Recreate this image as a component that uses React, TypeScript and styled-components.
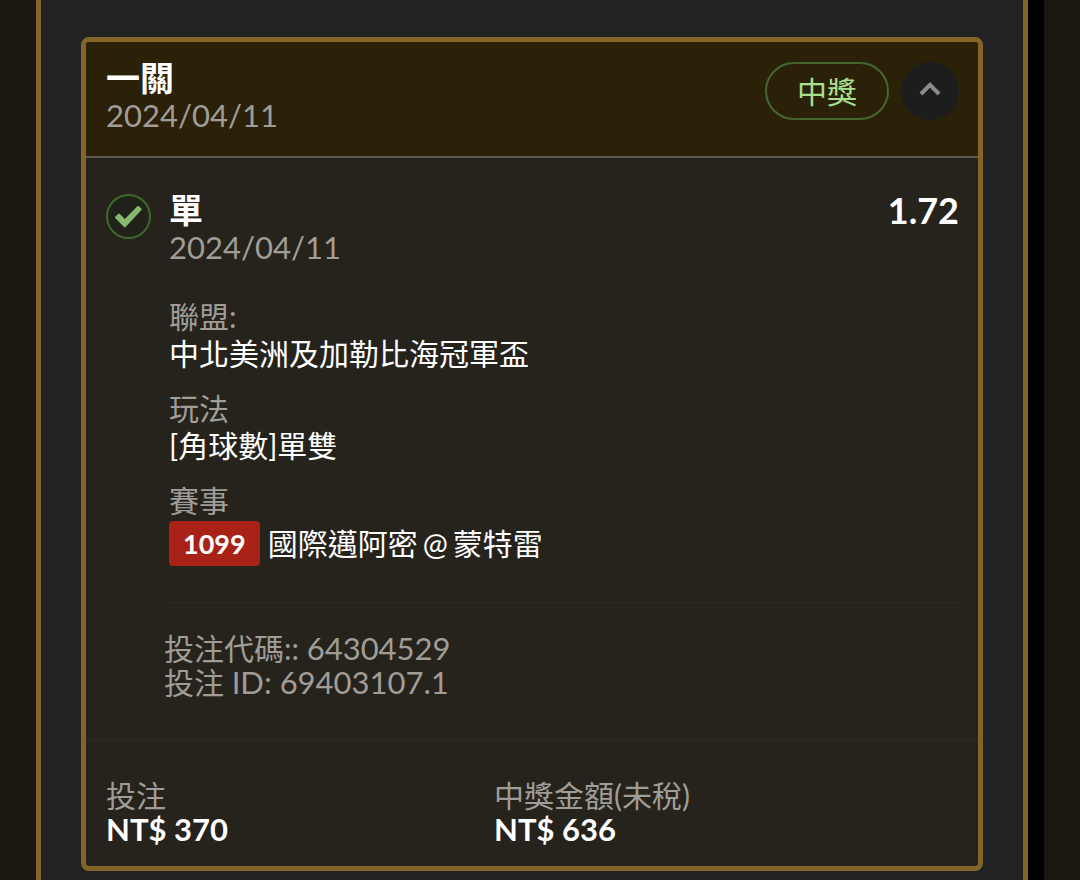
import React, { useState } from "react";
import styled, { createGlobalStyle } from "styled-components";

const GlobalStyle = createGlobalStyle`
  *, *::before, *::after { box-sizing: border-box; }
  html, body, #root { margin: 0; min-height: 100vh; }
  body {
    background: #1b1811;
    color: #ffffff;
    font-family: Lato, "Noto Sans CJK TC", sans-serif;
  }
  h2, h3, p, dl, dt, dd { margin: 0; }
`;

const gold = "#836627";
const muted = "#a09d98";

const Page = styled.div`
  display: flex;
  min-height: 100vh;
  padding: 0 36px;
`;

const Panel = styled.main`
  flex: 1;
  min-width: 0;
  padding: 37px 40px 9px;
  background: #222223;
  border: solid ${gold};
  border-width: 0 5px;
`;

const Gutter = styled.div`
  flex: 0 0 16px;
  background: #000000;
`;

const Card = styled.article`
  overflow: hidden;
  background: #26231d;
  border: 5px solid ${gold};
  border-radius: 8px;
`;

const CardHeader = styled.header`
  display: flex;
  align-items: center;
  justify-content: space-between;
  padding: 18px 19px 22px 20px;
  background: #2b2109;
  border-bottom: 2px solid #5f5a4e;
`;

const Title = styled.h2`
  font-size: 34px;
  line-height: 36px;
  font-weight: 700;
`;

const Selection = styled(Title).attrs({ as: "h3" })``;

const DateText = styled.time`
  display: block;
  font-size: 31px;
  line-height: 38px;
  color: ${muted};
`;

const Actions = styled.div`
  display: flex;
  align-self: flex-start;
  gap: 12px;
  padding-top: 2px;
`;

const Status = styled.span`
  height: 58px;
  padding: 0 30px;
  border: 2px solid #44672e;
  border-radius: 29px;
  font-size: 30px;
  line-height: 54px;
  color: #a9e08f;
`;

const Toggle = styled.button`
  display: grid;
  place-items: center;
  width: 58px;
  height: 58px;
  padding: 0 0 4px;
  border: 0;
  border-radius: 50%;
  background: #1d1d1e;
  cursor: pointer;
`;

const Bet = styled.section`
  display: flex;
  gap: 18px;
  padding: 34px 19px 40px 20px;
  border-bottom: 1px solid #2d2a25;
`;

const ResultMark = styled.div`
  padding-top: 2px;
  line-height: 0;
`;

const Details = styled.div`
  flex: 1;
  min-width: 0;
`;

const BetHead = styled.div`
  display: flex;
  justify-content: space-between;
`;

const Odds = styled.strong`
  font-size: 36px;
  line-height: 36px;
  font-weight: 700;
`;

const Fields = styled.dl`
  display: grid;
  gap: 18px;
  padding: 32px 0 36px;
  border-bottom: 1px solid #2d2a25;
`;

const Label = styled.dt`
  font-size: 30px;
  line-height: 37px;
  color: ${muted};
`;

const Value = styled.dd`
  font-size: 30px;
  line-height: 37px;
`;

const Match = styled(Value)`
  display: flex;
  align-items: center;
  gap: 8px;
  padding-top: 2px;
`;

const Teams = styled.span`
  display: flex;
  gap: 5px;
`;

const GameNumber = styled.span`
  padding: 0 14px;
  border-radius: 4px;
  background: #a82218;
  font-size: 27px;
  line-height: 45px;
  font-weight: 700;
`;

const Codes = styled.div`
  margin: 28px 0 0 -5px;
  font-size: 30px;
  line-height: 34px;
  color: ${muted};
`;

const Digits = styled.span`
  font-size: 31px;
`;

const Totals = styled.dl`
  display: grid;
  grid-template-columns: 388px 1fr;
  padding: 38px 20px 20px;
`;

const TotalLabel = styled(Label)`
  line-height: 34px;
`;

const Amount = styled.dd`
  font-size: 31px;
  line-height: 34px;
  font-weight: 700;
`;

const CheckIcon = () => (
  <svg width="45" height="45" viewBox="0 0 45 45" fill="none" role="img" aria-label="中獎">
    <circle cx="22.5" cy="22.5" r="21.5" fill="#212219" stroke="#3f682f" strokeWidth="2" />
    <path
      d="M9.4 22.6 12.2 19.9Q13 19.3 13.8 20L18.8 25 31.4 12.3Q32.2 11.6 33 12.2L35.4 14.4Q36.1 15.2 35.4 16L19.6 33Q18.8 33.7 18 33L9.4 24.3Q8.6 23.4 9.4 22.6Z"
      fill="#86b870"
    />
  </svg>
);

const Chevron = ({ up }: { up: boolean }) => (
  <svg width="22" height="16" viewBox="0 0 22 16" fill="none" aria-hidden="true">
    <path d={up ? "M2 13 11 3.8 20 13" : "M2 3.8 11 13 20 3.8"} stroke="#8c8c8c" strokeWidth="4" />
  </svg>
);

export default function App() {
  const [open, setOpen] = useState(true);
  return (
    <>
      <GlobalStyle />
      <Page>
        <Panel>
          <Card>
            <CardHeader>
              <div>
                <Title>一關</Title>
                <DateText dateTime="2024-04-11">2024/04/11</DateText>
              </div>
              <Actions>
                <Status>中獎</Status>
                <Toggle type="button" aria-label="詳情" aria-expanded={open} onClick={() => setOpen(!open)}>
                  <Chevron up={open} />
                </Toggle>
              </Actions>
            </CardHeader>
            {open && (
              <Bet>
                <ResultMark>
                  <CheckIcon />
                </ResultMark>
                <Details>
                  <BetHead>
                    <div>
                      <Selection>單</Selection>
                      <DateText dateTime="2024-04-11">2024/04/11</DateText>
                    </div>
                    <Odds>1.72</Odds>
                  </BetHead>
                  <Fields>
                    <div>
                      <Label>聯盟:</Label>
                      <Value>中北美洲及加勒比海冠軍盃</Value>
                    </div>
                    <div>
                      <Label>玩法</Label>
                      <Value>[角球數]單雙</Value>
                    </div>
                    <div>
                      <Label>賽事</Label>
                      <Match>
                        <GameNumber>1099</GameNumber>
                        <Teams>
                          <span>國際邁阿密</span>
                          <span>@</span>
                          <span>蒙特雷</span>
                        </Teams>
                      </Match>
                    </div>
                  </Fields>
                  <Codes>
                    <p>投注代碼:: <Digits>64304529</Digits></p>
                    <p>投注 <Digits>ID: 69403107.1</Digits></p>
                  </Codes>
                </Details>
              </Bet>
            )}
            <Totals>
              <div>
                <TotalLabel>投注</TotalLabel>
                <Amount>NT$ 370</Amount>
              </div>
              <div>
                <TotalLabel>中獎金額(未稅)</TotalLabel>
                <Amount>NT$ 636</Amount>
              </div>
            </Totals>
          </Card>
        </Panel>
        <Gutter />
      </Page>
    </>
  );
}
